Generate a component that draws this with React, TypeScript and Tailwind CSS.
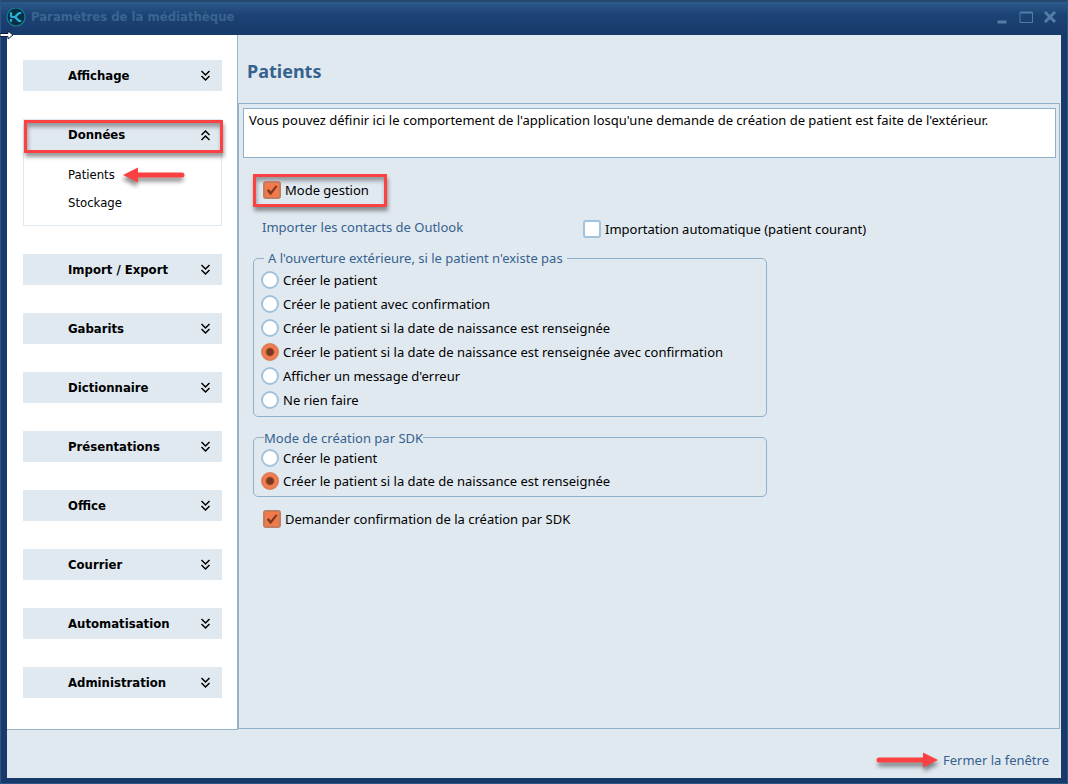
import { useState } from "react";

const SECTIONS = [
  { title: "Affichage" },
  { title: "Données", items: ["Patients", "Stockage"] },
  { title: "Import / Export" },
  { title: "Gabarits" },
  { title: "Dictionnaire" },
  { title: "Présentations" },
  { title: "Office" },
  { title: "Courrier" },
  { title: "Automatisation" },
  { title: "Administration" },
];

const OPENING_MODES = [
  "Créer le patient",
  "Créer le patient avec confirmation",
  "Créer le patient si la date de naissance est renseignée",
  "Créer le patient si la date de naissance est renseignée avec confirmation",
  "Afficher un message d'erreur",
  "Ne rien faire",
];

const SDK_MODES = [
  "Créer le patient",
  "Créer le patient si la date de naissance est renseignée",
];

function Chevrons({ up }: { up?: boolean }) {
  return (
    <svg
      viewBox="0 0 11 12"
      className={`h-3 w-[11px] ${up ? "rotate-180" : ""}`}
      fill="none"
      stroke="#000"
      strokeWidth="1.5"
      aria-hidden="true"
    >
      <path d="M1.5 1 5.5 5 9.5 1M1.5 6l4 4 4-4" />
    </svg>
  );
}

function Arrow({ left }: { left?: boolean }) {
  return (
    <svg
      viewBox="0 0 62 16"
      className={`h-4 w-[62px] drop-shadow-[1px_4px_2px_rgba(0,0,0,0.45)] ${left ? "-scale-x-100" : ""}`}
      aria-hidden="true"
    >
      <path d="M3 8h46" stroke="#fb4141" strokeWidth="5" strokeLinecap="round" />
      <path d="M47 0.5 62 8 47 15.5z" fill="#fb4141" />
    </svg>
  );
}

function Logo() {
  return (
    <svg viewBox="0 0 20 20" className="h-5 w-5" aria-hidden="true">
      <circle cx="10" cy="10" r="9" fill="#082f45" stroke="#168294" strokeWidth="1.2" />
      <path
        d="M5 5.2v3.6q0 1.2 1.2 1.2H9M5 14.8V12M15.2 6h-1.4q-.8 0-1.4.6L9 10l3.4 3.4q.6.6 1.4.6h1.4"
        fill="none"
        stroke="#2ab2dc"
        strokeWidth="2.2"
      />
    </svg>
  );
}

function Check({
  label,
  checked,
  onChange,
}: {
  label: string;
  checked: boolean;
  onChange: (v: boolean) => void;
}) {
  return (
    <label className="flex h-6 items-center gap-1">
      <span className="relative flex h-[18px] w-[18px] shrink-0">
        <input
          type="checkbox"
          checked={checked}
          onChange={(e) => onChange(e.target.checked)}
          className="h-[18px] w-[18px] appearance-none rounded-[3px] border-2 border-[#a3c3dc] bg-white checked:border-[#c17d60] checked:bg-[#f2794a]"
        />
        {checked && (
          <svg
            viewBox="0 0 18 18"
            className="pointer-events-none absolute inset-0"
            fill="#7d3a20"
            aria-hidden="true"
          >
            <path d="M3.8 9.6 5.8 8l2 2.4 4.8-5.8 2 .6L8.2 13.8H7z" />
          </svg>
        )}
      </span>
      {label}
    </label>
  );
}

function Radio({
  label,
  name,
  checked,
  onSelect,
  className,
}: {
  label: string;
  name: string;
  checked: boolean;
  onSelect: () => void;
  className: string;
}) {
  return (
    <label className={`flex items-center gap-1 ${className}`}>
      <input
        type="radio"
        name={name}
        checked={checked}
        onChange={onSelect}
        className="h-[18px] w-[18px] shrink-0 appearance-none rounded-full border-2 border-[#a3c3dc] bg-white checked:border-[#dd7c56] checked:bg-[radial-gradient(circle,#75391f_0_3px,#f47d50_5px)]"
      />
      {label}
    </label>
  );
}

function Sidebar() {
  const [open, setOpen] = useState("Données");

  return (
    <nav className="w-[231px] shrink-0 space-y-7 border-r border-b border-[#94b4cc] bg-white pt-[25px] pr-[15px] pb-[31px] pl-4 font-['DejaVu_Sans_Condensed','DejaVu_Sans',sans-serif] text-[13px] text-black">
      {SECTIONS.map(({ title, items }) => (
        <div key={title} className="relative">
          <button
            type="button"
            aria-expanded={open === title}
            onClick={() => setOpen(open === title ? "" : title)}
            className="flex h-[31px] w-full items-center justify-between bg-[#e1e9f0] pr-[11px] pl-[45px] font-bold"
          >
            {title}
            <Chevrons up={open === title} />
          </button>
          {items && open === title && (
            <ul className="border border-t-0 border-[#e1e9f0] pt-[11px] pb-2 pl-11">
              {items.map((item) => (
                <li key={item} className="flex h-7 items-center gap-2">
                  <a href="#">{item}</a>
                  {item === "Patients" && <Arrow left />}
                </li>
              ))}
            </ul>
          )}
          {title === "Données" && (
            <span className="pointer-events-none absolute top-px left-px h-[33px] w-full border-3 border-[#fb4141] shadow-[1px_4px_4px_rgba(0,0,0,0.4),inset_1px_4px_4px_rgba(0,0,0,0.35)]" />
          )}
        </div>
      ))}
    </nav>
  );
}

export default function App() {
  const [manage, setManage] = useState(true);
  const [autoImport, setAutoImport] = useState(false);
  const [confirmSdk, setConfirmSdk] = useState(true);
  const [opening, setOpening] = useState(3);
  const [sdk, setSdk] = useState(1);

  return (
    <div className="relative flex min-h-screen flex-col border-r border-b border-l border-[#2b5788] bg-[#173a6a] px-[6px] pb-[5px] font-['Noto_Sans',sans-serif] text-[13px] leading-5 text-black">
      <header className="-mx-[6px] flex h-[35px] items-center justify-between border-t-2 border-[#24486e] bg-linear-to-b from-[#2c5a8a] via-[#1c4274] via-40% to-[#173a6a] pr-[9px] pb-[3px] pl-[5px]">
        <div className="flex items-center gap-[5px]">
          <Logo />
          <h1 className="font-['DejaVu_Sans_Condensed','DejaVu_Sans',sans-serif] font-bold text-[#3a6590]">
            Paramètres de la médiathèque
          </h1>
        </div>
        <div className="flex items-center gap-2 text-[#527da5]">
          <button type="button" aria-label="Réduire">
            <svg viewBox="0 0 16 16" className="h-4 w-4" fill="none" stroke="currentColor">
              <path d="M3.5 13h9" strokeWidth="3" />
            </svg>
          </button>
          <button type="button" aria-label="Agrandir">
            <svg viewBox="0 0 16 16" className="h-4 w-4" fill="none" stroke="currentColor">
              <path d="M2 3.5h12.5v10H2z" />
              <path d="M2 3.5h12.5" strokeWidth="2" />
            </svg>
          </button>
          <button type="button" aria-label="Fermer">
            <svg viewBox="0 0 16 16" className="h-4 w-4" fill="none" stroke="currentColor">
              <path d="M3 3l10 10M13 3 3 13" strokeWidth="3" />
            </svg>
          </button>
        </div>
      </header>

      <div className="flex flex-1 bg-[#e1e9f0]">
        <Sidebar />
        <main className="flex min-w-0 flex-1 flex-col pr-px pb-px">
          <h2 className="flex h-[68px] items-center px-[9px] pt-1 text-lg font-bold text-[#35628f]">
            Patients
          </h2>
          <section className="flex-1 border border-[#8fb1cc] p-1 pr-[3px] pb-6">
            <p className="h-[50px] border border-[#8fb1cc] bg-white px-[5px] pt-px">
              Vous pouvez définir ici le comportement de l'application losqu'une demande de
              création de patient est faite de l'extérieur.
            </p>

            <div className="mt-4 ml-[10px]">
              <div className="flex h-[33px] w-[134px] items-center border-3 border-[#fb4141] pb-[2px] pl-[7px] shadow-[1px_4px_4px_rgba(0,0,0,0.4),inset_1px_4px_4px_rgba(0,0,0,0.35)]">
                <Check label="Mode gestion" checked={manage} onChange={setManage} />
              </div>

              <div className="mt-[10px] flex items-center">
                <a href="#" className="w-[330px] pb-1 pl-[9px] text-[#35628f]">
                  Importer les contacts de Outlook
                </a>
                <Check
                  label="Importation automatique (patient courant)"
                  checked={autoImport}
                  onChange={setAutoImport}
                />
              </div>

              <fieldset className="mt-[7px] max-w-[514px] rounded-[5px] border border-[#8fb1cc] px-[7px] pb-1">
                <legend className="ml-[3px] px-1 text-[#35628f]">
                  A l'ouverture extérieure, si le patient n'existe pas
                </legend>
                {OPENING_MODES.map((label, i) => (
                  <Radio
                    key={label}
                    name="opening"
                    label={label}
                    checked={opening === i}
                    onSelect={() => setOpening(i)}
                    className="h-6"
                  />
                ))}
              </fieldset>

              <fieldset className="mt-[11px] max-w-[514px] rounded-[5px] border border-[#8fb1cc] px-[7px] pb-1">
                <legend className="ml-[3px] h-[18px] text-[#35628f]">Mode de création par SDK</legend>
                {SDK_MODES.map((label, i) => (
                  <Radio
                    key={label}
                    name="sdk"
                    label={label}
                    checked={sdk === i}
                    onSelect={() => setSdk(i)}
                    className="h-[23px]"
                  />
                ))}
              </fieldset>

              <div className="mt-[10px] pl-[10px]">
                <Check
                  label="Demander confirmation de la création par SDK"
                  checked={confirmSdk}
                  onChange={setConfirmSdk}
                />
              </div>
            </div>
          </section>
        </main>
      </div>

      <footer className="flex h-12 items-center justify-end gap-[5px] bg-[#e1e9f0] pt-3 pr-3">
        <Arrow />
        <a href="#" className="text-[#35628f]">
          Fermer la fenêtre
        </a>
      </footer>

      {/* mouse pointer resting on the left window edge */}
      <svg viewBox="0 0 14 10" className="pointer-events-none absolute top-[30px] -left-px h-[10px] w-[14px]" aria-hidden="true">
        <path d="M0 3.5h8V1l5 4-5 4V6.5H0z" fill="#fff" stroke="#10203c" />
      </svg>
    </div>
  );
}
